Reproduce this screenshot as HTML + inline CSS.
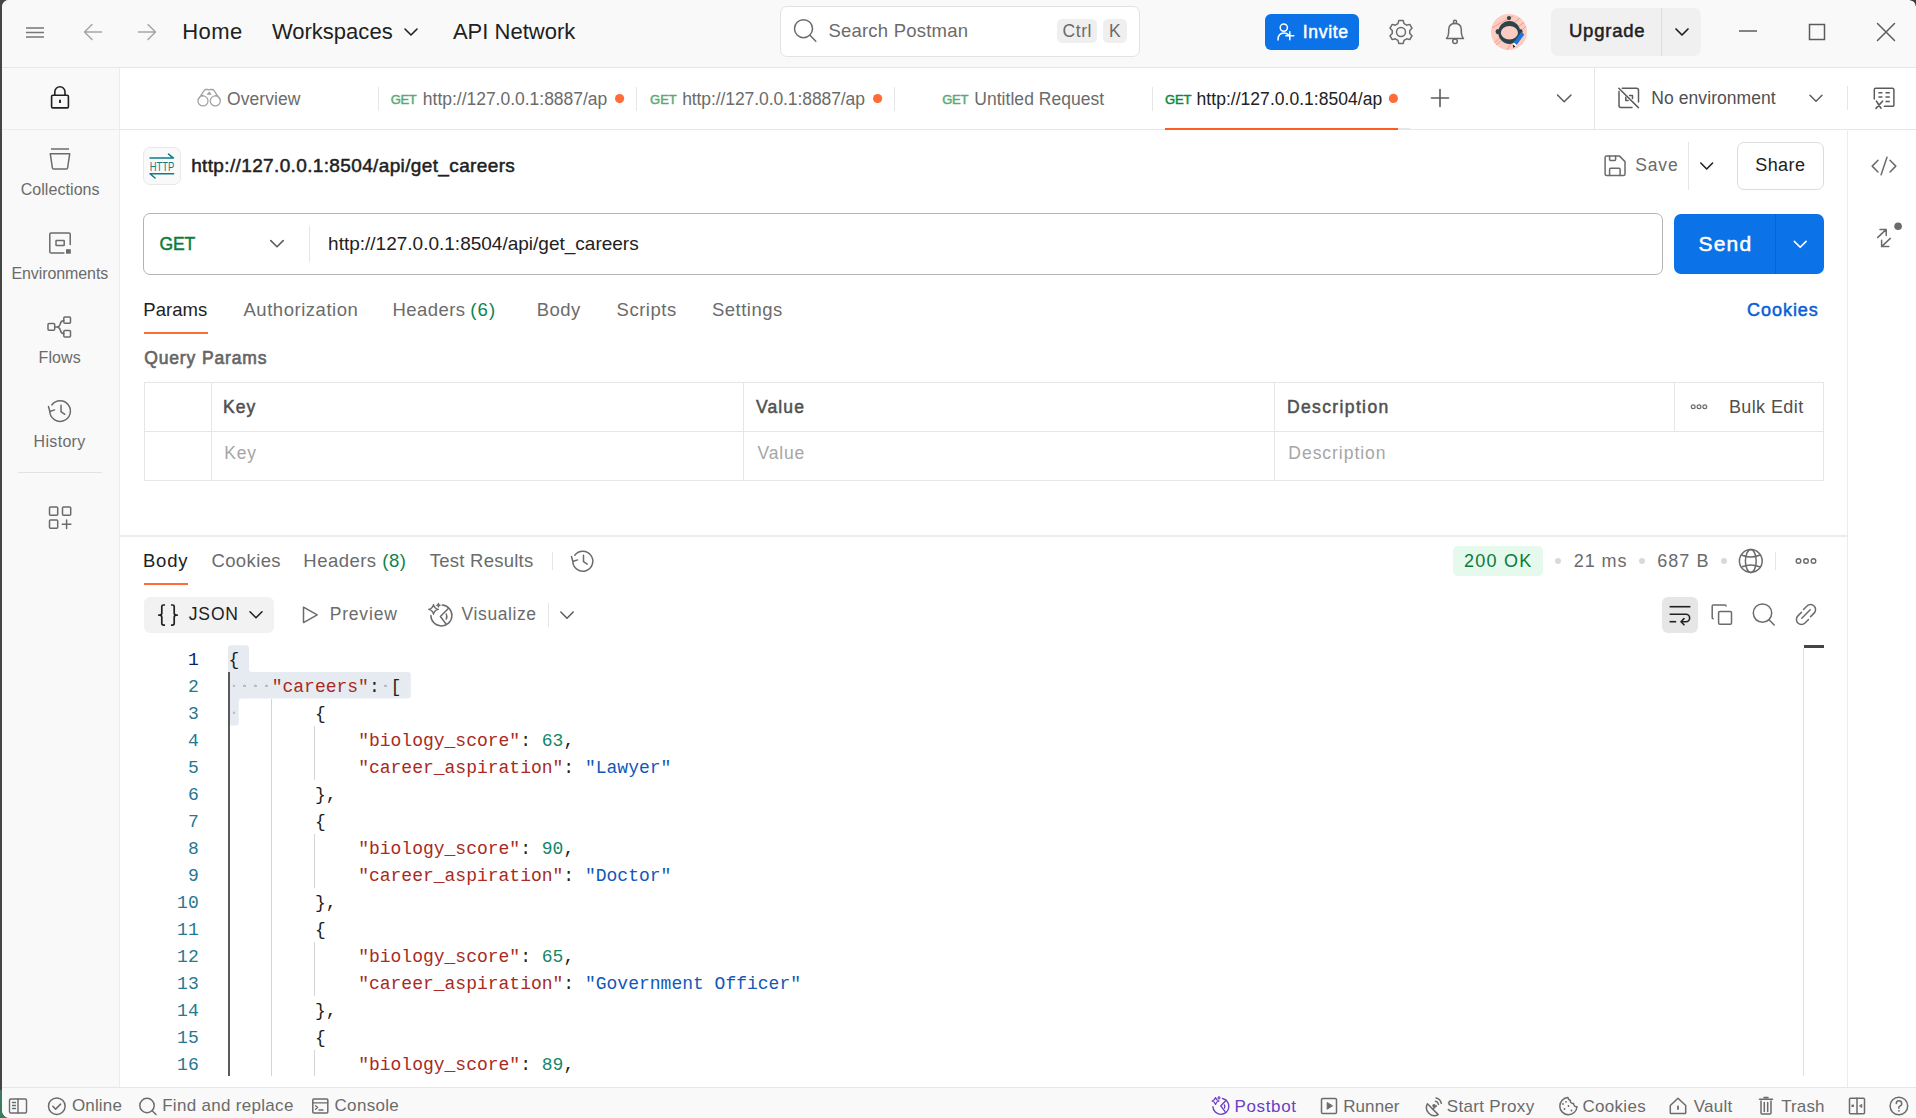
<!DOCTYPE html>
<html><head><meta charset="utf-8">
<style>
*{margin:0;padding:0;box-sizing:border-box}
html,body{width:1916px;height:1118px;overflow:hidden;background:#464646;font-family:"Liberation Sans",sans-serif;color:#212121;position:relative}
.a{position:absolute}
.t{position:absolute;white-space:nowrap;line-height:30px;height:30px}
svg.i{position:absolute;left:0;top:0;width:1916px;height:1118px;overflow:visible;pointer-events:none}
.st{fill:none;stroke:#6b6b6b;stroke-width:1.5;stroke-linecap:round;stroke-linejoin:round}
.cl{position:absolute;white-space:pre;line-height:27px;height:27px;font-family:"Liberation Mono",monospace;font-size:18px;color:#212121}
.k{color:#a82a22}.n{color:#12876a}.s{color:#1158b8}.p{color:#212121}.wd{display:inline-block;vertical-align:top;width:10.8px;height:27px;background:radial-gradient(circle at 50% 44%, #bdbdbd 1.2px, transparent 1.6px)}
.ln{position:absolute;width:60px;text-align:right;font-size:18px;line-height:27px;height:27px;font-family:"Liberation Mono",monospace}
</style></head>
<body>
<!-- desktop corner green -->
<div class="a" style="left:0;top:1090px;width:12px;height:28px;background:#3b7a5f"></div>
<!-- app background -->
<div class="a" style="left:2px;top:0;width:1914px;height:1118px;background:#ffffff;border-top-left-radius:7px;border-bottom-left-radius:8px;overflow:hidden">
  <!-- top bar -->
  <div class="a" style="left:0;top:0;width:1914px;height:68px;background:#f9f9f9;border-bottom:1px solid #e6e6e6"></div>
  <!-- left sidebar -->
  <div class="a" style="left:0;top:68px;width:118px;height:1020px;background:#f9f9f9;border-right:1px solid #ececec"></div>
  <div class="a" style="left:0;top:129px;width:118px;height:1px;background:#ececec"></div>
  <!-- footer -->
  <div class="a" style="left:0;top:1087px;width:1914px;height:31px;background:#f9f9f9;border-top:1px solid #e6e6e6"></div>
</div>
<!-- top-right corner -->
<div class="a" style="left:1910px;top:0;width:6px;height:6px;background:radial-gradient(circle at 0 100%, transparent 5px, #3c3c3c 6px)"></div>

<!-- tab bar bottom border -->
<div class="a" style="left:120px;top:129px;width:1796px;height:1px;background:#e6e6e6"></div>
<!-- tab separators -->
<div class="a" style="left:378px;top:87px;width:1px;height:24px;background:#e6e6e6"></div>
<div class="a" style="left:636px;top:87px;width:1px;height:24px;background:#e6e6e6"></div>
<div class="a" style="left:894px;top:87px;width:1px;height:24px;background:#e6e6e6"></div>
<div class="a" style="left:1152px;top:87px;width:1px;height:24px;background:#e6e6e6"></div>
<!-- active tab underline -->
<div class="a" style="left:1165px;top:128px;width:233px;height:2px;background:#ff5c1f"></div>
<div class="a" style="left:1398px;top:128px;width:12px;height:2px;background:#e6e6e6"></div>
<!-- env divider -->
<div class="a" style="left:1594px;top:68px;width:1px;height:61px;background:#e6e6e6"></div>
<div class="a" style="left:1847px;top:86px;width:1px;height:24px;background:#e6e6e6"></div>
<!-- right sidebar border -->
<div class="a" style="left:1847px;top:129px;width:1px;height:958px;background:#ececec"></div>

<!-- search box -->
<div class="a" style="left:780px;top:6px;width:360px;height:51px;background:#fff;border:1px solid #e3e3e3;border-radius:7px"></div>
<div class="a" style="left:1057px;top:19px;width:40px;height:24px;background:#efefef;border-radius:5px"></div>
<div class="a" style="left:1103px;top:19px;width:24px;height:24px;background:#efefef;border-radius:5px"></div>
<!-- invite -->
<div class="a" style="left:1265px;top:14px;width:94px;height:36px;background:#0b72e7;border-radius:6px"></div>
<!-- upgrade -->
<div class="a" style="left:1551px;top:8px;width:150px;height:48px;background:#f0f0f0;border-radius:7px"></div>
<div class="a" style="left:1661px;top:8px;width:1px;height:48px;background:#dedede"></div>

<!-- request header -->
<div class="a" style="left:143px;top:147px;width:38px;height:38px;background:#f9f9f9;border:1px solid #e9e9e9;border-radius:7px"></div>
<div class="a" style="left:1688px;top:142px;width:1px;height:48px;background:#e6e6e6"></div>
<div class="a" style="left:1737px;top:142px;width:87px;height:48px;border:1px solid #dcdcdc;border-radius:7px;background:#fff"></div>
<!-- url bar -->
<div class="a" style="left:143px;top:213px;width:1520px;height:62px;border:1px solid #b4b4b4;border-radius:7px;background:#fff"></div>
<div class="a" style="left:309px;top:226px;width:1px;height:36px;background:#e6e6e6"></div>
<div class="a" style="left:1674px;top:214px;width:150px;height:60px;background:#0b72e7;border-radius:7px"></div>
<div class="a" style="left:1775px;top:214px;width:1px;height:60px;background:#0b63cc"></div>
<!-- params underline -->
<div class="a" style="left:144px;top:332px;width:64px;height:2px;background:#ff6c37"></div>
<!-- table -->
<div class="a" style="left:144px;top:382px;width:1680px;height:99px;border:1px solid #e6e6e6"></div>
<div class="a" style="left:144px;top:431px;width:1680px;height:1px;background:#e6e6e6"></div>
<div class="a" style="left:211px;top:382px;width:1px;height:99px;background:#e6e6e6"></div>
<div class="a" style="left:743px;top:382px;width:1px;height:99px;background:#e6e6e6"></div>
<div class="a" style="left:1274px;top:382px;width:1px;height:99px;background:#e6e6e6"></div>
<div class="a" style="left:1674px;top:382px;width:1px;height:50px;background:#e6e6e6"></div>

<!-- split divider -->
<div class="a" style="left:120px;top:535px;width:1727px;height:2px;background:#ececec"></div>
<!-- response tabs -->
<div class="a" style="left:144px;top:583px;width:44px;height:2px;background:#ff6c37"></div>
<div class="a" style="left:552px;top:552px;width:1px;height:18px;background:#e6e6e6"></div>
<div class="a" style="left:1453px;top:546px;width:90px;height:30px;background:#e5f9ec;border-radius:5px"></div>
<div class="a" style="left:1555px;top:558px;width:6px;height:6px;background:#d9d9d9;border-radius:50%"></div>
<div class="a" style="left:1639px;top:558px;width:6px;height:6px;background:#d9d9d9;border-radius:50%"></div>
<div class="a" style="left:1721px;top:558px;width:6px;height:6px;background:#d9d9d9;border-radius:50%"></div>
<div class="a" style="left:1775px;top:552px;width:1px;height:18px;background:#e6e6e6"></div>
<!-- body toolbar -->
<div class="a" style="left:144px;top:597px;width:130px;height:36px;background:#f2f2f2;border-radius:6px"></div>
<div class="a" style="left:548px;top:603px;width:1px;height:24px;background:#e6e6e6"></div>
<div class="a" style="left:1662px;top:597px;width:36px;height:36px;background:#e6e6e6;border-radius:6px"></div>

<!-- code highlight -->
<svg class="i"><path fill="#e6eaf1" d="M231 645.2h15a3 3 0 0 1 3 3v20.9a3 3 0 0 0 3 3h155.8a3 3 0 0 1 3 3v20.5a3 3 0 0 1-3 3h-166.1a3 3 0 0 0-3 3v20.9a3 3 0 0 1-3 3h-4.7a3 3 0 0 1-3-3v-74.3a3 3 0 0 1 3-3z"/></svg>
<!-- indent guides -->
<div class="a" style="left:228px;top:672px;width:1.5px;height:404px;background:#5a5a5a"></div>
<div class="a" style="left:271px;top:699px;width:1px;height:377px;background:#d4d4d4"></div>
<div class="a" style="left:314px;top:726px;width:1px;height:54px;background:#d4d4d4"></div>
<div class="a" style="left:314px;top:834px;width:1px;height:54px;background:#d4d4d4"></div>
<div class="a" style="left:314px;top:942px;width:1px;height:54px;background:#d4d4d4"></div>
<div class="a" style="left:314px;top:1050px;width:1px;height:26px;background:#d4d4d4"></div>
<!-- scrollbar -->
<div class="a" style="left:1803px;top:648px;width:1px;height:428px;background:#e2e2e2"></div>
<div class="a" style="left:1804px;top:645px;width:20px;height:3px;background:#454545"></div>

<div class="cl" style="top:646.96px;left:228.5px"><span class="p">{</span></div>
<div class="ln" style="top:646.96px;left:138.7px;color:#0b216f">1</div>
<div class="cl" style="top:673.96px;left:228.5px"><span class="wd"></span><span class="wd"></span><span class="wd"></span><span class="wd"></span><span class="k">&quot;careers&quot;</span><span class="p">:</span><span class="wd"></span><span class="p">[</span></div>
<div class="ln" style="top:673.96px;left:138.7px;color:#237893">2</div>
<div class="cl" style="top:700.96px;left:228.5px"><span class="wd"></span>       <span class="p">{</span></div>
<div class="ln" style="top:700.96px;left:138.7px;color:#237893">3</div>
<div class="cl" style="top:727.96px;left:228.5px">            <span class="k">&quot;biology_score&quot;</span><span class="p">: </span><span class="n">63</span><span class="p">,</span></div>
<div class="ln" style="top:727.96px;left:138.7px;color:#237893">4</div>
<div class="cl" style="top:754.96px;left:228.5px">            <span class="k">&quot;career_aspiration&quot;</span><span class="p">: </span><span class="s">&quot;Lawyer&quot;</span></div>
<div class="ln" style="top:754.96px;left:138.7px;color:#237893">5</div>
<div class="cl" style="top:781.96px;left:228.5px">        <span class="p">},</span></div>
<div class="ln" style="top:781.96px;left:138.7px;color:#237893">6</div>
<div class="cl" style="top:808.96px;left:228.5px">        <span class="p">{</span></div>
<div class="ln" style="top:808.96px;left:138.7px;color:#237893">7</div>
<div class="cl" style="top:835.96px;left:228.5px">            <span class="k">&quot;biology_score&quot;</span><span class="p">: </span><span class="n">90</span><span class="p">,</span></div>
<div class="ln" style="top:835.96px;left:138.7px;color:#237893">8</div>
<div class="cl" style="top:862.96px;left:228.5px">            <span class="k">&quot;career_aspiration&quot;</span><span class="p">: </span><span class="s">&quot;Doctor&quot;</span></div>
<div class="ln" style="top:862.96px;left:138.7px;color:#237893">9</div>
<div class="cl" style="top:889.96px;left:228.5px">        <span class="p">},</span></div>
<div class="ln" style="top:889.96px;left:138.7px;color:#237893">10</div>
<div class="cl" style="top:916.96px;left:228.5px">        <span class="p">{</span></div>
<div class="ln" style="top:916.96px;left:138.7px;color:#237893">11</div>
<div class="cl" style="top:943.96px;left:228.5px">            <span class="k">&quot;biology_score&quot;</span><span class="p">: </span><span class="n">65</span><span class="p">,</span></div>
<div class="ln" style="top:943.96px;left:138.7px;color:#237893">12</div>
<div class="cl" style="top:970.96px;left:228.5px">            <span class="k">&quot;career_aspiration&quot;</span><span class="p">: </span><span class="s">&quot;Government Officer&quot;</span></div>
<div class="ln" style="top:970.96px;left:138.7px;color:#237893">13</div>
<div class="cl" style="top:997.96px;left:228.5px">        <span class="p">},</span></div>
<div class="ln" style="top:997.96px;left:138.7px;color:#237893">14</div>
<div class="cl" style="top:1024.96px;left:228.5px">        <span class="p">{</span></div>
<div class="ln" style="top:1024.96px;left:138.7px;color:#237893">15</div>
<div class="cl" style="top:1051.96px;left:228.5px">            <span class="k">&quot;biology_score&quot;</span><span class="p">: </span><span class="n">89</span><span class="p">,</span></div>
<div class="ln" style="top:1051.96px;left:138.7px;color:#237893">16</div>

<svg class="i">
<g class="st">
 <!-- hamburger -->
 <path d="M26 28h18M26 32.5h18M26 37h18" stroke="#777" stroke-width="1.4" stroke-linecap="butt"/>
 <!-- back/fwd -->
 <path d="M101.5 32H85M92 24.5L84.5 32L92 39.5" stroke="#a6a6a6"/>
 <path d="M138.5 32H155M148 24.5L155.5 32L148 39.5" stroke="#a6a6a6"/>
 <!-- workspaces chevron -->
 <path d="M405 29L411 35L417 29" stroke="#212121" stroke-width="1.6"/>
 <!-- search -->
 <circle cx="803.5" cy="28.7" r="9"/><path d="M810.2 35.4L815.8 41.2"/>
 <!-- gear -->
 <path d="M1397.96 23.64 L1398.79 20.61 L1403.21 20.61 L1404.04 23.64 L1406.72 25.18 L1409.75 24.39 L1411.97 28.22 L1409.76 30.45 L1409.76 33.55 L1411.97 35.78 L1409.75 39.61 L1406.72 38.82 L1404.04 40.36 L1403.21 43.39 L1398.79 43.39 L1397.96 40.36 L1395.28 38.82 L1392.25 39.61 L1390.03 35.78 L1392.24 33.55 L1392.24 30.45 L1390.03 28.22 L1392.25 24.39 L1395.28 25.18Z" stroke-width="1.5"/>
 <circle cx="1401" cy="32" r="4.5"/>
 <!-- bell -->
 <circle cx="1455" cy="21.9" r="1.6"/>
 <path d="M1446.5 38.6h17c-1.3-1.3-2-3.2-2.1-5.6l-0.2-4.2c-0.3-3.3-2.9-5.3-6.2-5.3s-5.9 2-6.2 5.3l-0.2 4.2c-0.1 2.4-0.8 4.3-2.1 5.6z"/>
 <circle cx="1455" cy="41.3" r="2.3"/>
 <!-- upgrade chevron -->
 <path d="M1676 29L1682 35L1688 29" stroke="#212121" stroke-width="1.7"/>
 <!-- window controls -->
 <path d="M1739 31h18" stroke="#5c5c5c" stroke-linecap="butt"/>
 <rect x="1809.5" y="24.5" width="15" height="15" stroke="#5c5c5c" stroke-linejoin="miter"/>
 <path d="M1877.5 23.5l17 17M1894.5 23.5l-17 17" stroke="#5c5c5c"/>
 <!-- invite person -->
 <g stroke="#fff" stroke-width="1.5"><circle cx="1283.8" cy="27.6" r="3.6"/><path d="M1278 40c0-4.5 2.5-7 6-7c1.8 0 3.2 0.6 4.2 1.6"/><path d="M1289.8 31.8v8M1285.8 35.8h8"/></g>

 <!-- lock -->
 <g stroke="#212121" stroke-width="1.6"><path d="M54.8 95v-3.2a5.1 5.1 0 0 1 10.2 0V95"/><rect x="51.6" y="95.3" width="16.8" height="12.6" rx="1.2"/><path d="M60 99.8v3.2" stroke-width="1.9" stroke-linecap="butt"/></g>
 <!-- collections -->
 <path d="M51 149h18" stroke-linecap="butt"/><path d="M50.3 153.8h19.4l-2.1 14.2a1.2 1.2 0 0 1-1.2 1h-12.8a1.2 1.2 0 0 1-1.2-1z"/>
 <!-- environments -->
 <path d="M70.2 244.6v-10.4a1.3 1.3 0 0 0-1.3-1.3h-17.8a1.3 1.3 0 0 0-1.3 1.3v17.6a1.3 1.3 0 0 0 1.3 1.3h12.8"/>
 <rect x="56" y="240.4" width="8.2" height="5.2" rx="0.5"/>
 <!-- flows -->
 <rect x="48" y="323.6" width="6.7" height="6.7" rx="1"/><rect x="63.8" y="316.9" width="6.7" height="6.4" rx="1"/><rect x="63.8" y="330.4" width="6.7" height="6.6" rx="1"/>
 <path d="M54.7 327h2.3c2.5 0 2.8-1.3 3.3-3.2s1.3-3.2 3.5-3.2M57 327c2.5 0 2.8 1.3 3.3 3.2s1.3 3.5 3.5 3.5"/>
 <!-- history sidebar -->
 <path d="M49.8 411.5a10.3 10.3 0 1 0 2-6.5"/><path d="M48.5 406.5l1.3 5l4.8-1.6"/><path d="M61 405.2v6.5l3.8 2.6"/>
 <!-- apps -->
 <rect x="49.5" y="507" width="8.2" height="8.2" rx="1"/><rect x="62.5" y="507" width="8.2" height="8.2" rx="1"/><rect x="49.5" y="520" width="8.2" height="8.2" rx="1"/><path d="M66.6 520v8.6M62.3 524.3h8.6"/>
 <path d="M18 472.5h84" stroke="#e2e2e2" stroke-width="1" stroke-linecap="butt"/>

 <!-- binoculars -->
 <g stroke="#a3a3a3" stroke-width="1.3"><circle cx="203" cy="100.9" r="5"/><circle cx="215.3" cy="100.9" r="5"/><path d="M198.2 99.5L204.3 90.3c0.4-0.5 1-0.8 1.6-0.8h2c0.5 0 0.8 0.6 1.2 0.6s0.7-0.6 1.2-0.6h2c0.6 0 1.2 0.3 1.6 0.8L220.1 99.5"/><path d="M201.5 95.5h1.5M215.5 95.5h1.5"/><path d="M207.6 94.2l1.6-1.8 1.6 1.8z" fill="#a3a3a3"/></g>
 <!-- tab plus, chevrons -->
 <path d="M1440 89.5v17M1431.5 98h17" stroke="#5c5c5c" stroke-width="1.6"/>
 <path d="M1557.5 95L1564.2 101.7L1571 95" stroke="#5c5c5c" stroke-width="1.5"/>
 <!-- no env -->
 <g stroke="#5c5c5c" stroke-width="1.5"><path d="M1622.3 88.3h14.2a2 2 0 0 1 2 2v11.6M1632 107.5h-11a2 2 0 0 1-2-2V91.6M1618.8 88.3l19.6 19.3"/><path d="M1625.8 97.2v3.3h2.3M1629.6 95.4h2.9v3.2"/></g>
 <path d="M1810 95.3L1816 101.3L1822 95.3" stroke="#5c5c5c" stroke-width="1.5"/>
 <!-- var icon -->
 <g stroke="#5c5c5c" stroke-width="1.5"><path d="M1874.3 98.9v-9.2a1.4 1.4 0 0 1 1.4-1.4h16.8a1.4 1.4 0 0 1 1.4 1.4v15.2a1.4 1.4 0 0 1-1.4 1.4h-8.2"/><path d="M1878.4 92.8h4M1885.5 92.8h4.3M1878.4 97h4M1885.5 97h4.3M1885.5 101.6h4.3" stroke-linecap="butt"/><path d="M1876.5 101.2l4.5 7M1882.5 101.2l-6.5 7.2" stroke-width="1.6"/></g>
 <!-- right sidebar icons -->
 <g stroke="#6b6b6b" stroke-width="1.5"><path d="M1878 160.2l-5.8 5.9 5.8 5.9M1890 160.2l5.8 5.9-5.8 5.9M1887 157.3l-5.9 17.4"/>
 <path d="M1880 229.4h6.2v6.1M1886.2 229.4l-8.6 8.2M1888.8 246.6h-7.2v-6.4M1881.6 246.6l8.7-8.2"/></g>
 <circle cx="1898.1" cy="226.3" r="3.8" fill="#6b6b6b" stroke="none"/>

 <!-- HTTP badge icon -->
 <g stroke="#0e7c8a" stroke-width="1.5"><path d="M150 158.1h23.5l-5-4M173.6 173.8H150l5 4.2"/></g>
 <!-- save -->
 <path d="M1605.1 157.4a1.5 1.5 0 0 1 1.5-1.5h12.7l5.7 5.7v12.3a1.5 1.5 0 0 1-1.5 1.5h-16.9a1.5 1.5 0 0 1-1.5-1.5z"/>
 <path d="M1609.6 155.9v3.6a1 1 0 0 0 1 1h4a1 1 0 0 0 1-1v-3.6M1609.6 175.4v-6.2a1 1 0 0 1 1-1h8.5a1 1 0 0 1 1 1v6.2"/>
 <path d="M1700.8 163L1706.7 169L1712.6 163" stroke="#212121" stroke-width="1.6"/>
 <!-- GET chevron -->
 <path d="M270.8 240.6L277 246.8L283.2 240.6" stroke="#5c5c5c" stroke-width="1.6"/>
 <!-- send chevron -->
 <path d="M1794.3 241.4L1800.2 247.3L1806.1 241.4" stroke="#fff" stroke-width="1.6"/>
 <!-- bulk ••• -->
 <g stroke="#6b6b6b" stroke-width="1.2"><circle cx="1693.2" cy="406.8" r="1.9"/><circle cx="1699" cy="406.8" r="1.9"/><circle cx="1704.8" cy="406.8" r="1.9"/></g>
 <!-- response history -->
 <path d="M572.8 561.5a10 10 0 1 0 2-6.3"/><path d="M571.5 556.5l1.3 5l4.8-1.6"/><path d="M583.5 555.3v6.3l3.7 2.5"/>
 <!-- globe -->
 <g stroke="#6b6b6b" stroke-width="1.5"><circle cx="1750.8" cy="561" r="11.4"/><ellipse cx="1750.8" cy="561" rx="5.4" ry="11.4"/><path d="M1742.2 555.2q8.6 3.8 17.2 0M1742.2 566.8q8.6-3.8 17.2 0"/></g>
 <!-- ••• -->
 <g stroke="#6b6b6b" stroke-width="1.4"><circle cx="1798.5" cy="561" r="2.3"/><circle cx="1806" cy="561" r="2.3"/><circle cx="1813.5" cy="561" r="2.3"/></g>
 <!-- JSON chevron -->
 <path d="M250 611.8L256 617.8L262 611.8" stroke="#212121" stroke-width="1.6"/>
 <!-- play -->
 <path d="M303.5 607.2v15.4l13.7-7.7z"/>
 <!-- visualize -->
 <path d="M442.2 605a10.5 10.5 0 1 1-11.3 10.5"/><path d="M448.3 608.4l-7.9 8.1 5.8 7.8"/><path d="M446.3 614c0.7 1.6 0.7 3.3 0 5"/>
 <path d="M433.5 604.6c0.6 2.8 1.9 4.2 4.8 4.8c-2.9 0.6-4.2 2-4.8 4.8c-0.6-2.8-1.9-4.2-4.8-4.8c2.9-0.6 4.2-2 4.8-4.8z" stroke-width="1.4"/>
 <path d="M438.4 603.4l0.5 1.3 1.3 0.5-1.3 0.5-0.5 1.3-0.5-1.3-1.3-0.5 1.3-0.5z" stroke-width="1.2"/>
 <path d="M560.8 612L567 618.2L573.2 612" stroke="#5c5c5c" stroke-width="1.5"/>
 <!-- wrap -->
 <g stroke="#212121" stroke-width="1.6"><path d="M1669.6 606.7h20.8" stroke-linecap="butt"/><path d="M1669.6 614.2h16.3a3.7 3.7 0 0 1 0 7.5h-4.5" stroke-linecap="butt"/><path d="M1669.6 621.7h6.6" stroke-linecap="butt"/><path d="M1684 618.6l-3 3.1 3 3.1"/></g>
 <!-- copy -->
 <path d="M1726 606a1 1 0 0 0-1-1h-11.8a1 1 0 0 0-1 1v11.7a1 1 0 0 0 1 1"/><rect x="1718.6" y="611.4" width="12.9" height="12.9" rx="1.3"/>
 <!-- search -->
 <circle cx="1762.5" cy="613.1" r="9.2"/><path d="M1769 619.7l5.2 5.3"/>
 <!-- link -->
 <path d="M1803.5 609.5l3.5-3.5a5 5 0 0 1 7.1 7.1l-3.5 3.5M1808.5 619.5l-3.5 3.5a5 5 0 0 1-7.1-7.1l3.5-3.5M1801.8 618.2l8.4-8.4"/>

 <!-- footer icons -->
 <g stroke="#6b6b6b" stroke-width="1.4"><rect x="9.5" y="1099" width="17" height="14" rx="1.3"/><path d="M18 1099v14M12.5 1102.5h3M12.5 1105.5h3M12.5 1108.5h3"/></g>
 <circle cx="56.8" cy="1106.2" r="8.3"/><path d="M52.8 1106.3l2.8 2.8 5-5"/>
 <circle cx="147" cy="1105.5" r="7.2"/><path d="M152.2 1110.7l3.8 3.8"/>
 <rect x="312.8" y="1099" width="15" height="14" rx="1"/><path d="M312.8 1102.8h15M315.5 1105.7l2.2 1.8-2.2 1.8M319 1110h4" stroke-width="1.3"/>
 <!-- postbot -->
 <g stroke="#6b40c4" stroke-width="1.4"><path d="M1222.5 1098.5a8 8 0 1 1-9.6 8.3"/><path d="M1226.2 1100.3l-5.5 5.6 4.2 5.5"/><path d="M1224.5 1105c0.4 1 0.4 2 0 3"/><path d="M1215.5 1097.5c0.5 2.1 1.4 3 3.5 3.5c-2.1 0.5-3 1.4-3.5 3.5c-0.5-2.1-1.4-3-3.5-3.5c2.1-0.5 3-1.4 3.5-3.5z" stroke-width="1.2"/><path d="M1219 1096.6l0.4 1 1 0.4-1 0.4-0.4 1-0.4-1-1-0.4 1-0.4z" stroke-width="1"/></g>
 <!-- runner -->
 <rect x="1321.5" y="1098.5" width="15" height="15" rx="1.3"/><path d="M1327.2 1102.8v6.4l5-3.2z" fill="#6b6b6b" stroke-width="1"/>
 <!-- proxy -->
 <path d="M1427.4 1103.8a8 8 0 0 0 10.8 10.8z"/><path d="M1432.8 1109.2l3.5-3.5" /><circle cx="1434" cy="1105.8" r="1" fill="#6b6b6b"/><path d="M1435.5 1101.3a4 4 0 0 1 3 3M1436 1098a7 7 0 0 1 5.3 5.3"/>
 <!-- cookies -->
 <path d="M1568 1097.5a8.6 8.6 0 1 0 9 9.2a3 3 0 0 1-3.4-3.1a3 3 0 0 1-3.3-3.3a3 3 0 0 1-2.3-2.8z"/><g fill="#6b6b6b" stroke="none"><circle cx="1563" cy="1104" r="0.9"/><circle cx="1566" cy="1101.8" r="0.9"/><circle cx="1564.5" cy="1109" r="0.9"/><circle cx="1568.5" cy="1106" r="0.9"/><circle cx="1571.5" cy="1110.5" r="0.9"/></g>
 <!-- vault -->
 <path d="M1670.3 1105.5l7.7-7.3l7.7 7.3v7.3a0.8 0.8 0 0 1-0.8 0.8h-13.8a0.8 0.8 0 0 1-0.8-0.8z"/><path d="M1678 1106.5v2.5" stroke-width="1.8"/>
 <!-- trash -->
 <path d="M1759.5 1099.2h13M1764 1097.5h4M1761 1101v12a1 1 0 0 0 1 1h8a1 1 0 0 0 1-1v-12M1764.3 1102.5v9M1767.7 1102.5v9"/>
 <!-- split -->
 <rect x="1849.5" y="1098.3" width="15" height="15.5" rx="1"/><path d="M1857 1098.3v15.5"/><rect x="1851.5" y="1104.6" width="2.4" height="2.4" fill="#6b6b6b" stroke="none"/><path d="M1859.6 1105.8l2.2-1.5v3z" fill="#6b6b6b" stroke-width="0.8"/>
 <!-- help -->
 <circle cx="1898.9" cy="1106" r="8.8"/><path d="M1896.3 1103.5a2.7 2.7 0 1 1 3.5 2.6c-0.6 0.3-0.9 0.8-0.9 1.4v0.7"/><circle cx="1898.9" cy="1110.8" r="0.9" fill="#6b6b6b" stroke="none"/>
</g>
<!-- orange dots -->
<circle cx="619.6" cy="98.6" r="4.6" fill="#ff6c37"/>
<circle cx="877.6" cy="98.6" r="4.6" fill="#ff6c37"/>
<circle cx="1393.4" cy="98.4" r="4.6" fill="#ff6c37"/>
<!-- env sidebar filled square -->
<rect x="66" y="249.2" width="4.8" height="4.5" fill="#6b6b6b"/>
<!-- HTTP letters -->
<text x="149.8" y="170.8" font-family="Liberation Sans" font-size="12.5" fill="#0e7c8a" textLength="24.5" lengthAdjust="spacingAndGlyphs">HTTP</text>
<!-- JSON braces -->
<g fill="none" stroke="#212121" stroke-width="1.7" stroke-linejoin="round"><path d="M165 605h-1.6a1.6 1.6 0 0 0-1.6 1.6v6.3a2.2 2.2 0 0 1-2.2 2.2h-0.8h0.8a2.2 2.2 0 0 1 2.2 2.2v6.3a1.6 1.6 0 0 0 1.6 1.6h1.6"/><path d="M171 605h1.6a1.6 1.6 0 0 1 1.6 1.6v6.3a2.2 2.2 0 0 0 2.2 2.2h0.8h-0.8a2.2 2.2 0 0 0-2.2 2.2v6.3a1.6 1.6 0 0 1-1.6 1.6h-1.6"/></g>
<!-- avatar -->
<circle cx="1509" cy="32" r="18" fill="#fccbc1"/>
<clipPath id="avc"><circle cx="1509" cy="32" r="18"/></clipPath><g stroke="#f79a88" stroke-width="1" fill="none" clip-path="url(#avc)"><path d="M1492 28l21-12M1515 22l10-8M1519 26l8-6M1523 29l4-4M1494 43l7-6M1496 45l5-4M1507 50l6-10"/></g>
<path fill="#2a4449" fill-rule="evenodd" d="M1498.3 32.4a11 11.5 0 1 0 22 0a11 11.5 0 1 0-22 0zM1500.8 32.8a8.6 6.8 0 1 0 17.2 0a8.6 6.8 0 1 0-17.2 0z"/>
<ellipse cx="1497.8" cy="31.6" rx="2.2" ry="2.6" fill="#2a4449"/>
<ellipse cx="1520.8" cy="31.6" rx="1.8" ry="2.6" fill="#2a4449"/>
<circle cx="1509" cy="18.1" r="2.1" fill="#2a4449"/>
<path d="M1521.3 32l3 2.4-7.6 10.6-3-2.4z" fill="#1e73de"/>
<path d="M1513.7 42.6l3 2.4-1.3 1.6-2.6-2z" fill="#fff"/>
<path d="M1512.8 44.6l2.6 2-2.2 1.2z" fill="#1a1a1a"/>
</svg>


<div class="t" id="home" style="left:182.36px;top:17.48px;font-size:22px;font-weight:400;color:#212121;letter-spacing:0.365px;">Home</div>
<div class="t" id="ws" style="left:271.89px;top:17.48px;font-size:22px;font-weight:400;color:#212121;letter-spacing:0.014px;">Workspaces</div>
<div class="t" id="apin" style="left:452.90px;top:17.48px;font-size:22px;font-weight:400;color:#212121;letter-spacing:0.018px;">API Network</div>
<div class="t" id="srch" style="left:828.38px;top:15.69px;font-size:18.5px;font-weight:400;color:#6b6b6b;letter-spacing:0.215px;">Search Postman</div>
<div class="t" id="ctrl" style="left:1062.53px;top:16.04px;font-size:17.5px;font-weight:400;color:#6b6b6b;letter-spacing:0.582px;">Ctrl</div>
<div class="t" id="kk" style="left:1109.04px;top:16.04px;font-size:17.5px;font-weight:400;color:#6b6b6b;letter-spacing:0.000px;">K</div>
<div class="t" id="invite" style="left:1302.66px;top:16.74px;font-size:17.5px;font-weight:400;color:#ffffff;letter-spacing:0.714px;-webkit-text-stroke:0.5px currentColor;">Invite</div>
<div class="t" id="upg" style="left:1568.93px;top:16.39px;font-size:18.5px;font-weight:400;color:#212121;letter-spacing:0.790px;-webkit-text-stroke:0.5px currentColor;">Upgrade</div>
<div class="t" id="ovw" style="left:227.07px;top:83.54px;font-size:17.5px;font-weight:400;color:#6b6b6b;letter-spacing:0.060px;">Overview</div>
<div class="t" id="g1" style="left:390.87px;top:84.80px;font-size:13px;font-weight:400;color:#5aaa78;letter-spacing:-0.443px;-webkit-text-stroke:0.5px currentColor;">GET</div>
<div class="t" id="u1" style="left:422.83px;top:83.54px;font-size:17.5px;font-weight:400;color:#6b6b6b;letter-spacing:-0.019px;">http://127.0.0.1:8887/ap</div>
<div class="t" id="g2" style="left:650.09px;top:84.80px;font-size:13px;font-weight:400;color:#5aaa78;letter-spacing:-0.012px;-webkit-text-stroke:0.5px currentColor;">GET</div>
<div class="t" id="u2" style="left:682.17px;top:83.54px;font-size:17.5px;font-weight:400;color:#6b6b6b;letter-spacing:-0.090px;">http://127.0.0.1:8887/ap</div>
<div class="t" id="g3" style="left:942.32px;top:84.80px;font-size:13px;font-weight:400;color:#5aaa78;letter-spacing:-0.303px;-webkit-text-stroke:0.5px currentColor;">GET</div>
<div class="t" id="u3" style="left:974.28px;top:83.54px;font-size:17.5px;font-weight:400;color:#6b6b6b;letter-spacing:0.039px;">Untitled Request</div>
<div class="t" id="g4" style="left:1165.05px;top:84.80px;font-size:13px;font-weight:400;color:#0a8a3e;letter-spacing:-0.210px;-webkit-text-stroke:0.5px currentColor;">GET</div>
<div class="t" id="u4" style="left:1196.59px;top:83.54px;font-size:17.5px;font-weight:400;color:#212121;letter-spacing:0.033px;">http://127.0.0.1:8504/ap</div>
<div class="t" id="noenv" style="left:1651.33px;top:82.94px;font-size:17.5px;font-weight:400;color:#505050;letter-spacing:0.066px;">No environment</div>
<div class="t" id="title" style="left:191.14px;top:150.62px;font-size:19px;font-weight:400;color:#212121;letter-spacing:0.365px;-webkit-text-stroke:0.5px currentColor;">http://127.0.0.1:8504/api/get_careers</div>
<div class="t" id="save" style="left:1635.28px;top:150.44px;font-size:17.5px;font-weight:400;color:#6b6b6b;letter-spacing:0.835px;">Save</div>
<div class="t" id="share" style="left:1755.18px;top:150.26px;font-size:18px;font-weight:400;color:#212121;letter-spacing:0.460px;">Share</div>
<div class="t" id="getm" style="left:159.55px;top:228.74px;font-size:17.5px;font-weight:400;color:#0a7f3a;letter-spacing:-0.147px;-webkit-text-stroke:0.5px currentColor;">GET</div>
<div class="t" id="url" style="left:328.07px;top:228.52px;font-size:19px;font-weight:400;color:#212121;letter-spacing:0.002px;">http://127.0.0.1:8504/api/get_careers</div>
<div class="t" id="send" style="left:1698.50px;top:228.82px;font-size:21px;font-weight:400;color:#ffffff;letter-spacing:1.217px;-webkit-text-stroke:0.5px currentColor;">Send</div>
<div class="t" id="params" style="left:143.33px;top:294.69px;font-size:18.5px;font-weight:400;color:#212121;letter-spacing:0.026px;">Params</div>
<div class="t" id="auth" style="left:243.46px;top:294.69px;font-size:18.5px;font-weight:400;color:#6b6b6b;letter-spacing:0.532px;">Authorization</div>
<div class="t" id="hdrs" style="left:392.40px;top:294.69px;font-size:18.5px;font-weight:400;color:#6b6b6b;letter-spacing:0.447px;">Headers</div>
<div class="t" id="hdr6" style="left:470.25px;top:294.69px;font-size:18.5px;font-weight:400;color:#0a8550;letter-spacing:1.135px;">(6)</div>
<div class="t" id="body" style="left:536.69px;top:294.69px;font-size:18.5px;font-weight:400;color:#6b6b6b;letter-spacing:0.442px;">Body</div>
<div class="t" id="scripts" style="left:616.56px;top:294.69px;font-size:18.5px;font-weight:400;color:#6b6b6b;letter-spacing:0.513px;">Scripts</div>
<div class="t" id="settings" style="left:711.94px;top:294.69px;font-size:18.5px;font-weight:400;color:#6b6b6b;letter-spacing:0.491px;">Settings</div>
<div class="t" id="cookies" style="left:1747.11px;top:294.56px;font-size:18px;font-weight:400;color:#0b5ed7;letter-spacing:0.940px;-webkit-text-stroke:0.5px currentColor;">Cookies</div>
<div class="t" id="qp" style="left:144.20px;top:343.04px;font-size:17.5px;font-weight:400;color:#666666;letter-spacing:0.867px;-webkit-text-stroke:0.65px currentColor;">Query Params</div>
<div class="t" id="hkey" style="left:222.93px;top:391.74px;font-size:17.5px;font-weight:400;color:#505050;letter-spacing:1.139px;-webkit-text-stroke:0.5px currentColor;">Key</div>
<div class="t" id="hval" style="left:756.10px;top:391.94px;font-size:17.5px;font-weight:400;color:#505050;letter-spacing:1.084px;-webkit-text-stroke:0.5px currentColor;">Value</div>
<div class="t" id="hdesc" style="left:1287.01px;top:391.94px;font-size:17.5px;font-weight:400;color:#505050;letter-spacing:1.368px;-webkit-text-stroke:0.5px currentColor;">Description</div>
<div class="t" id="bulk" style="left:1728.88px;top:391.96px;font-size:18px;font-weight:400;color:#505050;letter-spacing:0.408px;">Bulk Edit</div>
<div class="t" id="pkey" style="left:224.13px;top:437.84px;font-size:17.5px;font-weight:400;color:#a6a6a6;letter-spacing:0.917px;">Key</div>
<div class="t" id="pval" style="left:757.61px;top:437.94px;font-size:17.5px;font-weight:400;color:#a6a6a6;letter-spacing:0.812px;">Value</div>
<div class="t" id="pdesc" style="left:1288.33px;top:437.94px;font-size:17.5px;font-weight:400;color:#a6a6a6;letter-spacing:0.964px;">Description</div>
<div class="t" id="rbody" style="left:142.93px;top:545.69px;font-size:18.5px;font-weight:400;color:#212121;letter-spacing:0.791px;">Body</div>
<div class="t" id="rcook" style="left:211.46px;top:545.69px;font-size:18.5px;font-weight:400;color:#6b6b6b;letter-spacing:0.381px;">Cookies</div>
<div class="t" id="rhdr" style="left:303.33px;top:545.69px;font-size:18.5px;font-weight:400;color:#6b6b6b;letter-spacing:0.475px;">Headers</div>
<div class="t" id="rhdr8" style="left:382.25px;top:545.69px;font-size:18.5px;font-weight:400;color:#0a8550;letter-spacing:0.548px;">(8)</div>
<div class="t" id="rtest" style="left:429.73px;top:545.69px;font-size:18.5px;font-weight:400;color:#6b6b6b;letter-spacing:0.247px;">Test Results</div>
<div class="t" id="ok" style="left:1464.12px;top:545.86px;font-size:18px;font-weight:400;color:#0a7a3a;letter-spacing:1.240px;">200 OK</div>
<div class="t" id="ms" style="left:1573.70px;top:545.86px;font-size:18px;font-weight:400;color:#6b6b6b;letter-spacing:0.950px;">21 ms</div>
<div class="t" id="bytes" style="left:1657.19px;top:545.86px;font-size:18px;font-weight:400;color:#6b6b6b;letter-spacing:1.065px;">687 B</div>
<div class="t" id="json" style="left:188.76px;top:598.64px;font-size:17.5px;font-weight:400;color:#212121;letter-spacing:0.854px;">JSON</div>
<div class="t" id="prev" style="left:329.64px;top:598.64px;font-size:17.5px;font-weight:400;color:#6b6b6b;letter-spacing:0.837px;">Preview</div>
<div class="t" id="vis" style="left:461.61px;top:598.64px;font-size:17.5px;font-weight:400;color:#6b6b6b;letter-spacing:0.596px;">Visualize</div>
<div class="t" id="scol" style="left:20.63px;top:175.16px;font-size:16px;font-weight:400;color:#6b6b6b;letter-spacing:0.068px;">Collections</div>
<div class="t" id="senv" style="left:11.44px;top:259.16px;font-size:16px;font-weight:400;color:#6b6b6b;letter-spacing:-0.089px;">Environments</div>
<div class="t" id="sflow" style="left:38.59px;top:342.96px;font-size:16px;font-weight:400;color:#6b6b6b;letter-spacing:0.094px;">Flows</div>
<div class="t" id="shist" style="left:33.59px;top:427.36px;font-size:16px;font-weight:400;color:#6b6b6b;letter-spacing:0.313px;">History</div>
<div class="t" id="online" style="left:71.93px;top:1091.41px;font-size:17px;font-weight:400;color:#6b6b6b;letter-spacing:0.159px;">Online</div>
<div class="t" id="find" style="left:162.15px;top:1091.41px;font-size:17px;font-weight:400;color:#6b6b6b;letter-spacing:0.305px;">Find and replace</div>
<div class="t" id="cons" style="left:334.53px;top:1091.41px;font-size:17px;font-weight:400;color:#6b6b6b;letter-spacing:0.322px;">Console</div>
<div class="t" id="pbot" style="left:1234.54px;top:1091.51px;font-size:17px;font-weight:400;color:#6b40c4;letter-spacing:0.635px;">Postbot</div>
<div class="t" id="runner" style="left:1343.15px;top:1091.51px;font-size:17px;font-weight:400;color:#6b6b6b;letter-spacing:0.107px;">Runner</div>
<div class="t" id="proxy" style="left:1446.73px;top:1091.51px;font-size:17px;font-weight:400;color:#6b6b6b;letter-spacing:0.337px;">Start Proxy</div>
<div class="t" id="fcook" style="left:1582.53px;top:1091.51px;font-size:17px;font-weight:400;color:#6b6b6b;letter-spacing:0.285px;">Cookies</div>
<div class="t" id="vault" style="left:1693.75px;top:1091.51px;font-size:17px;font-weight:400;color:#6b6b6b;letter-spacing:0.225px;">Vault</div>
<div class="t" id="trash" style="left:1781.17px;top:1091.51px;font-size:17px;font-weight:400;color:#6b6b6b;letter-spacing:0.148px;">Trash</div>

</body></html>
